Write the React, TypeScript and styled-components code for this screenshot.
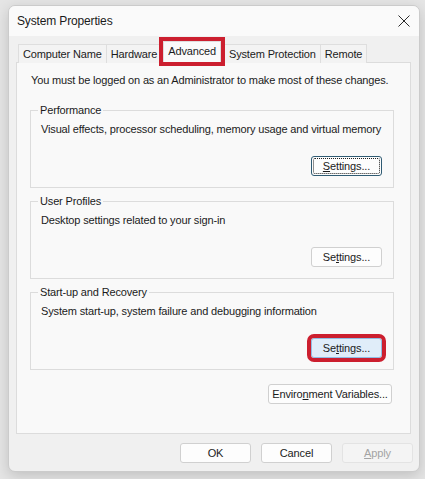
import React from "react";
import styled, { createGlobalStyle, css } from "styled-components";

const GlobalStyle = createGlobalStyle`
  html, body {
    margin: 0;
    padding: 0;
  }
  body {
    width: 425px;
    height: 479px;
    overflow: hidden;
    background: #e5e5e5;
    font-family: "Liberation Sans", Arial, sans-serif;
    font-size: 11px;
    letter-spacing: -0.15px;
    color: #1b1b1b;
  }
`;

const Window = styled.div`
  box-sizing: border-box;
  margin: 5px 0 0 8px;
  width: 412px;
  height: 467px;
  background: #f0f0f0;
  border: 1px solid #cbcbcb;
  border-radius: 7px;
  box-shadow: 0 4px 14px rgba(0, 0, 0, 0.16);
  display: flex;
  flex-direction: column;
  overflow: hidden;
`;

const TitleBar = styled.div`
  height: 30px;
  flex-shrink: 0;
  background: #fafafa;
  display: flex;
  align-items: center;
  justify-content: space-between;
  padding: 0 8px 0 8px;
  font-size: 12px;
  color: #1a1a1a;
`;

const CloseBtn = styled.div`
  width: 14px;
  height: 14px;
  display: flex;
  align-items: center;
  justify-content: center;
`;

const Body = styled.div`
  flex: 1;
  display: flex;
  flex-direction: column;
  padding: 5px 8px 0 7px;
`;

const TabRow = styled.div`
  display: flex;
  align-items: flex-end;
  height: 22px;
  padding-left: 2px;
  position: relative;
  z-index: 1;
  margin-bottom: -1px;
`;

const Tab = styled.div<{ $active?: boolean; $marked?: boolean }>`
  box-sizing: border-box;
  height: 19px;
  padding: 0 4px;
  display: flex;
  align-items: center;
  background: #f3f3f3;
  border: 1px solid #dedede;
  border-bottom: none;
  margin-left: -1px;
  white-space: nowrap;
  &:first-child {
    margin-left: 0;
  }
  ${(p) =>
    p.$active &&
    css`
      height: 21px;
      margin: 0 4px 0 1px;
      background: #fafafa;
      padding-bottom: 2px;
    `}
  ${(p) =>
    p.$marked &&
    css`
      outline: 4px solid #cc1f2f;
      position: relative;
      top: -1px;
    `}
`;

const Panel = styled.div`
  box-sizing: border-box;
  height: 372px;
  background: #f9f9f9;
  border: 1px solid #dcdcdc;
  padding: 10px 16px 0 13px;
  display: flex;
  flex-direction: column;
`;

const Notice = styled.p`
  margin: 0 0 15px 1px;
  line-height: 15px;
  white-space: nowrap;
`;

const Group = styled.fieldset`
  margin: 0 0 6px 0;
  padding: 4px 11px 11px 9px;
  border: 1px solid #dcdcdc;
  min-width: 0;
`;

const Legend = styled.legend`
  padding: 0 2px;
  margin-left: -2px;
  line-height: 15px;
`;

const Desc = styled.p`
  margin: 0 0 0 1px;
  line-height: 15px;
  white-space: nowrap;
`;

const ButtonRow = styled.div<{ $top?: number; $right?: number }>`
  display: flex;
  justify-content: flex-end;
  margin-top: ${(p) => p.$top ?? 19}px;
  margin-right: ${(p) => p.$right ?? 0}px;
`;

const Button = styled.button<{
  $width?: number;
  $focused?: boolean;
  $hot?: boolean;
  $marked?: boolean;
}>`
  box-sizing: border-box;
  width: ${(p) => p.$width ?? 71}px;
  height: 20px;
  padding: 0;
  font-family: inherit;
  font-size: 11px;
  letter-spacing: -0.15px;
  white-space: nowrap;
  color: #1b1b1b;
  background: #fdfdfd;
  border: 1px solid #d0d0d0;
  border-radius: 3px;
  position: relative;
  cursor: default;
  &:disabled {
    color: #a3a3a3;
    background: #f4f4f4;
    border-color: #e3e3e3;
  }
  ${(p) =>
    p.$focused &&
    css`
      border-color: #2f5b73;
      &::after {
        content: "";
        position: absolute;
        inset: 1px;
        border: 1px dotted #222;
        border-radius: 2px;
      }
    `}
  ${(p) =>
    p.$hot &&
    css`
      background: #e0edf9;
      border-color: #90bde4;
    `}
  ${(p) =>
    p.$marked &&
    css`
      outline: 4px solid #cc1f2f;
    `}
`;

const Footer = styled.div`
  display: flex;
  justify-content: flex-end;
  gap: 10px;
  padding: 9px 0 0 0;
  margin-right: -2px;
`;

const Groups: { title: string; desc: string; focused?: boolean; hot?: boolean }[] = [
  {
    title: "Performance",
    desc: "Visual effects, processor scheduling, memory usage and virtual memory",
    focused: true,
  },
  { title: "User Profiles", desc: "Desktop settings related to your sign-in" },
  {
    title: "Start-up and Recovery",
    desc: "System start-up, system failure and debugging information",
    hot: true,
  },
];

const tabs = ["Computer Name", "Hardware", "Advanced", "System Protection", "Remote"];

export default function App() {
  return (
    <>
      <GlobalStyle />
      <Window>
        <TitleBar>
          <span>System Properties</span>
          <CloseBtn>
            <svg width="12" height="12" viewBox="0 0 12 12">
              <path d="M0.5 0.5 L11.5 11.5 M11.5 0.5 L0.5 11.5" stroke="#2a2a2a" strokeWidth="1" />
            </svg>
          </CloseBtn>
        </TitleBar>
        <Body>
          <TabRow>
            {tabs.map((t) => (
              <Tab key={t} $active={t === "Advanced"} $marked={t === "Advanced"}>
                {t}
              </Tab>
            ))}
          </TabRow>
          <Panel>
            <Notice>You must be logged on as an Administrator to make most of these changes.</Notice>
            {Groups.map((g) => (
              <Group key={g.title}>
                <Legend>{g.title}</Legend>
                <Desc>{g.desc}</Desc>
                <ButtonRow>
                  <Button $focused={g.focused} $hot={g.hot} $marked={g.hot}>
                    {g.focused ? (
                      <>
                        <u>S</u>ettings...
                      </>
                    ) : (
                      <>
                        Se<u>t</u>tings...
                      </>
                    )}
                  </Button>
                </ButtonRow>
              </Group>
            ))}
            <ButtonRow $top={8} $right={2}>
              <Button $width={124}>
                Enviro<u>n</u>ment Variables...
              </Button>
            </ButtonRow>
          </Panel>
          <Footer>
            <Button>OK</Button>
            <Button>Cancel</Button>
            <Button disabled>
              <u>A</u>pply
            </Button>
          </Footer>
        </Body>
      </Window>
    </>
  );
}
